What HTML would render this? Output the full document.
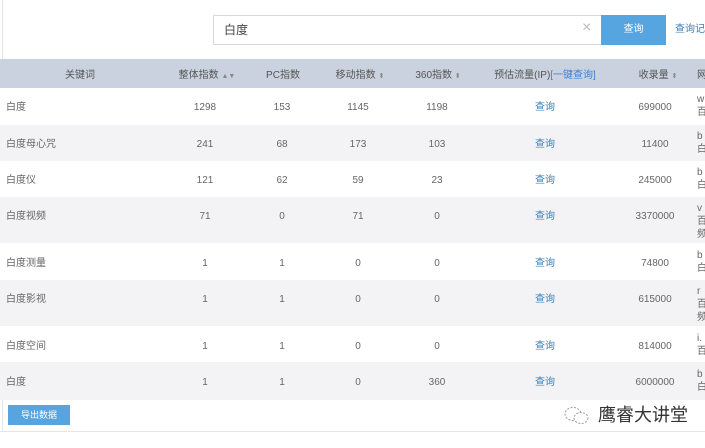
<!DOCTYPE html>
<html><head><meta charset="utf-8"><style>
*{margin:0;padding:0;box-sizing:border-box}
body{width:705px;height:448px;overflow:hidden;background:#fff;font-family:"Liberation Sans","Noto Sans CJK SC",sans-serif;font-size:10px;line-height:12px;color:#666;position:relative}
.a{position:absolute;white-space:nowrap}
.row{position:absolute;left:0;width:705px}
.row>div{margin-top:2px}
.c{position:absolute;transform:translateX(-50%);white-space:nowrap}
.l{position:absolute;left:6px}
.q{color:#3b7fb8}
.s{font-size:7px;color:#888}
</style></head><body>
<div class="a" style="left:2px;top:0;width:1px;height:432px;background:#e6e6e6"></div>
<div class="a" style="left:213px;top:15px;width:389px;height:30px;border:1px solid #d8d8d8;"></div>
<div class="a" style="left:224px;top:23px;font-size:12px;line-height:14px;color:#444">白度</div>
<div class="a" style="left:582px;top:20px;font-size:16px;line-height:16px;color:#bbb">×</div>
<div class="a" style="left:601px;top:15px;width:65px;height:30px;background:#56a4e0;color:#fff;text-align:center;line-height:30px;font-size:10px">查询</div>
<div class="a" style="left:675px;top:24px;color:#3b7fb8">查询记</div>
<div class="row" style="top:59px;height:29px;background:#cbd2df;color:#555">
<div class="c" style="left:80px;top:9px">关键词</div>
<div class="c" style="left:207px;top:9px">整体指数 <span class="s">▲▼</span></div>
<div class="c" style="left:283px;top:9px">PC指数</div>
<div class="c" style="left:360px;top:9px">移动指数 <span class="s">⬍</span></div>
<div class="c" style="left:438px;top:9px">360指数 <span class="s">⬍</span></div>
<div class="c" style="left:545px;top:9px">预估流量(IP)<span style="color:#3b7fd8">[一键查询]</span></div>
<div class="c" style="left:658px;top:9px">收录量 <span class="s">⬍</span></div>
<div class="a" style="left:697px;top:9px">网</div>
</div>
<div class="row" style="top:88px;height:37px;background:#fff"><div class="l" style="top:12px">白度</div><div class="c" style="left:205px;top:12px">1298</div><div class="c" style="left:282px;top:12px">153</div><div class="c" style="left:358px;top:12px">1145</div><div class="c" style="left:437px;top:12px">1198</div><div class="c q" style="left:545px;top:12px">查询</div><div class="c" style="left:655px;top:12px">699000</div><div class="a" style="left:697px;top:3px;line-height:13px">w<br>百</div></div>
<div class="row" style="top:125px;height:36px;background:#f3f3f5"><div class="l" style="top:12px">白度母心咒</div><div class="c" style="left:205px;top:12px">241</div><div class="c" style="left:282px;top:12px">68</div><div class="c" style="left:358px;top:12px">173</div><div class="c" style="left:437px;top:12px">103</div><div class="c q" style="left:545px;top:12px">查询</div><div class="c" style="left:655px;top:12px">11400</div><div class="a" style="left:697px;top:3px;line-height:13px">b<br>白</div></div>
<div class="row" style="top:161px;height:36px;background:#fff"><div class="l" style="top:12px">白度仪</div><div class="c" style="left:205px;top:12px">121</div><div class="c" style="left:282px;top:12px">62</div><div class="c" style="left:358px;top:12px">59</div><div class="c" style="left:437px;top:12px">23</div><div class="c q" style="left:545px;top:12px">查询</div><div class="c" style="left:655px;top:12px">245000</div><div class="a" style="left:697px;top:3px;line-height:13px">b<br>白</div></div>
<div class="row" style="top:197px;height:46px;background:#f3f3f5"><div class="l" style="top:12px">白度视频</div><div class="c" style="left:205px;top:12px">71</div><div class="c" style="left:282px;top:12px">0</div><div class="c" style="left:358px;top:12px">71</div><div class="c" style="left:437px;top:12px">0</div><div class="c q" style="left:545px;top:12px">查询</div><div class="c" style="left:655px;top:12px">3370000</div><div class="a" style="left:697px;top:3px;line-height:13px">v<br>百<br>频</div></div>
<div class="row" style="top:243px;height:37px;background:#fff"><div class="l" style="top:13px">白度测量</div><div class="c" style="left:205px;top:13px">1</div><div class="c" style="left:282px;top:13px">1</div><div class="c" style="left:358px;top:13px">0</div><div class="c" style="left:437px;top:13px">0</div><div class="c q" style="left:545px;top:13px">查询</div><div class="c" style="left:655px;top:13px">74800</div><div class="a" style="left:697px;top:4px;line-height:13px">b<br>白</div></div>
<div class="row" style="top:280px;height:46px;background:#f3f3f5"><div class="l" style="top:12px">白度影视</div><div class="c" style="left:205px;top:12px">1</div><div class="c" style="left:282px;top:12px">1</div><div class="c" style="left:358px;top:12px">0</div><div class="c" style="left:437px;top:12px">0</div><div class="c q" style="left:545px;top:12px">查询</div><div class="c" style="left:655px;top:12px">615000</div><div class="a" style="left:697px;top:3px;line-height:13px">r<br>百<br>频</div></div>
<div class="row" style="top:326px;height:36px;background:#fff"><div class="l" style="top:13px">白度空间</div><div class="c" style="left:205px;top:13px">1</div><div class="c" style="left:282px;top:13px">1</div><div class="c" style="left:358px;top:13px">0</div><div class="c" style="left:437px;top:13px">0</div><div class="c q" style="left:545px;top:13px">查询</div><div class="c" style="left:655px;top:13px">814000</div><div class="a" style="left:697px;top:4px;line-height:13px">i.<br>百</div></div>
<div class="row" style="top:362px;height:38px;background:#f3f3f5"><div class="l" style="top:13px">白度</div><div class="c" style="left:205px;top:13px">1</div><div class="c" style="left:282px;top:13px">1</div><div class="c" style="left:358px;top:13px">0</div><div class="c" style="left:437px;top:13px">360</div><div class="c q" style="left:545px;top:13px">查询</div><div class="c" style="left:655px;top:13px">6000000</div><div class="a" style="left:697px;top:4px;line-height:13px">b<br>白</div></div>
<div class="a" style="left:8px;top:405px;width:62px;height:20px;background:#56a4e0;color:#fff;text-align:center;line-height:20px;font-size:9px">导出数据</div>
<svg class="a" style="left:562px;top:405px" width="30" height="22" viewBox="0 0 30 22"><ellipse cx="11" cy="9" rx="8" ry="6.5" fill="none" stroke="#999" stroke-width="1" stroke-dasharray="2 1.5"/><ellipse cx="19" cy="13" rx="7" ry="5.5" fill="#fff" stroke="#999" stroke-width="1" stroke-dasharray="2 1.5"/></svg>
<div class="a" style="left:598px;top:405px;font-size:18px;line-height:20px;color:#333">鹰睿大讲堂</div>
<div class="a" style="left:0;top:431px;width:705px;height:1px;background:#e6e6e6"></div>
</body></html>
